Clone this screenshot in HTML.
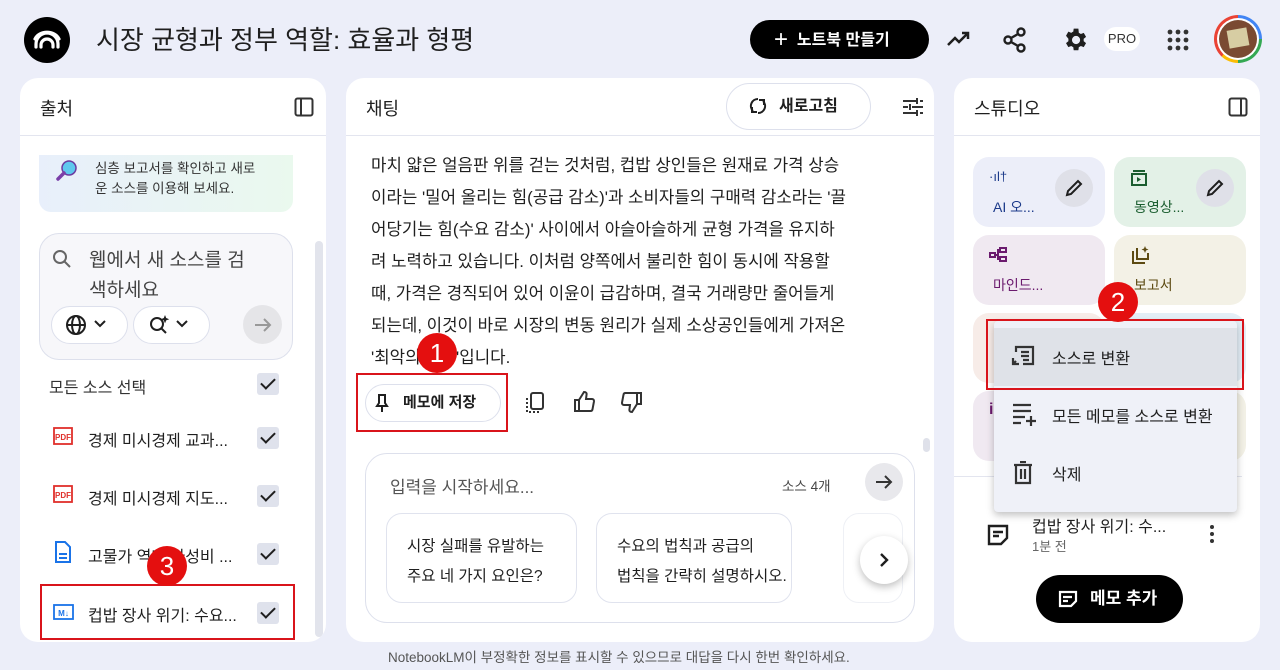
<!DOCTYPE html>
<html><head><meta charset="utf-8">
<style>
*{box-sizing:border-box;margin:0;padding:0}
body{width:1280px;height:670px;background:#eceef9;font-family:"Liberation Sans","Noto Sans CJK KR",sans-serif;color:#1f1f1f;position:relative;overflow:hidden}
.a{position:absolute}
.panel{position:absolute;background:#fff;border-radius:18px;top:78px;height:564px;overflow:hidden}
.ph{position:absolute;left:0;right:0;top:0;height:58px;border-bottom:1px solid #e3e5ef}
.ph span{position:absolute;left:20px;top:17px;font-size:18px;color:#1f1f1f}
.chk{position:absolute;width:22px;height:22px;background:#dfe2ec;border-radius:3px}
.chk:after{content:"";position:absolute;left:7px;top:2px;width:6px;height:12px;border:solid #1f1f1f;border-width:0 2px 2px 0;transform:rotate(45deg)}
.src{position:absolute;left:68px;font-size:16px;color:#1f1f1f}
.red{position:absolute;border:2px solid #d9141b}
.badge{position:absolute;width:40px;height:40px;border-radius:50%;background:#e40f0f;color:#fff;font-size:26px;text-align:center;line-height:40px}
.tl{position:absolute;left:371px;font-size:16.8px;color:#1f1f1f;white-space:nowrap}
.card{position:absolute;width:132px;height:70px;border-radius:16px}
.card .t{position:absolute;left:20px;top:40px;font-size:14px}
.ed{position:absolute;right:12px;top:12px;width:38px;height:38px;border-radius:50%;background:#dfe0e8}
</style></head><body>
<div class="a" style="left:24px;top:17px;width:46px;height:46px;border-radius:50%;background:#000">
<svg width="46" height="46" viewBox="0 0 46 46"><g fill="none" stroke="#fff" stroke-width="3.2" stroke-linecap="round"><path d="M12 30 V27 a11 11 0 0 1 22 0 V30"/><path d="M17 30 V28 a6 6 0 0 1 12 0 V30"/><path d="M11 22 a13 11 0 0 1 24 0"/></g></svg></div>
<div class="a" style="left:96px;top:20px;font-size:26px;color:#1f1f1f">시장 균형과 정부 역할: 효율과 형평</div>
<div class="a" style="left:750px;top:20px;width:179px;height:39px;background:#000;border-radius:20px;color:#fff;font-size:16px;font-weight:bold;line-height:39px;padding-left:24px"><span style="font-size:24px;font-weight:normal;vertical-align:-2px">+</span>&nbsp;&nbsp;노트북 만들기</div>
<svg class="a" style="left:946px;top:28px" width="26" height="22" viewBox="0 0 26 22"><path d="M2 17 L9 10 L13 14 L22 5 M16 5 H22 V11" fill="none" stroke="#1f1f1f" stroke-width="2.5"/></svg>
<svg class="a" style="left:1002px;top:26px" width="26" height="28" viewBox="0 0 26 28"><g fill="none" stroke="#1f1f1f" stroke-width="2.4"><circle cx="19" cy="6" r="3.5"/><circle cx="6" cy="14" r="3.5"/><circle cx="19" cy="22" r="3.5"/><path d="M9 12 L16 8 M9 16 L16 20"/></g></svg>
<svg class="a" style="left:1061px;top:26px" width="28" height="28" viewBox="0 0 24 24"><path fill="#1f1f1f" d="M19.4 13c.04-.33.06-.66.06-1s-.02-.67-.06-1l2.1-1.650-2-3.46-2.48 1a7.3 7.3 0 0 0-1.73-1L14.9 2.2h-4l-.38 2.65c-.63.25-1.2.6-1.730 1l-2.48-1-2 3.46L6.4 11c-.04.33-.07.66-.07 1s.03.67.07 1l-2.1 1.65 2 3.46 2.48-1c.53.4 1.1.75 1.73 1l.38 2.65h4l.38-2.65c.63-.25 1.2-.6 1.73-1l2.48 1 2-3.46L19.4 13zM12.9 15.5a3.5 3.5 0 1 1 0-7 3.5 3.5 0 0 1 0 7z"/></svg>
<div class="a" style="left:1104px;top:27px;width:36px;height:24px;border-radius:12px;background:#fff;font-size:13px;line-height:24px;text-align:center;color:#333">PRO</div>
<svg class="a" style="left:1166px;top:28px" width="24" height="24"><g fill="#333"><circle cx="4" cy="4" r="2.4"/><circle cx="12" cy="4" r="2.4"/><circle cx="20" cy="4" r="2.4"/><circle cx="4" cy="12" r="2.4"/><circle cx="12" cy="12" r="2.4"/><circle cx="20" cy="12" r="2.4"/><circle cx="4" cy="20" r="2.4"/><circle cx="12" cy="20" r="2.4"/><circle cx="20" cy="20" r="2.4"/></g></svg>
<div class="a" style="left:1214px;top:15px;width:48px;height:48px;border-radius:50%;background:conic-gradient(#4285f4 0 25%,#34a853 25% 50%,#fbbc05 50% 62%,#ea4335 62% 100%)"><div style="margin:3px;width:42px;height:42px;border-radius:50%;background:#fff;padding:2px"><div style="width:38px;height:38px;border-radius:50%;background:#7a4a32;position:relative"><div style="position:absolute;left:9px;top:9px;width:20px;height:18px;background:#d7cda3;transform:rotate(-10deg)"></div></div></div></div>

<div class="panel" style="left:20px;width:306px">
 <div class="ph"><span>출처</span>
 <svg class="a" style="left:274px;top:19px" width="20" height="20"><rect x="1.5" y="1.5" width="17" height="17" rx="2" fill="none" stroke="#333" stroke-width="2"/><path d="M7 2v16" stroke="#333" stroke-width="2"/></svg></div>
 <div class="a" style="left:19px;top:77px;width:254px;height:57px;border-radius:0 0 12px 12px;background:linear-gradient(90deg,#e8effb,#eaf9ee)"></div>
 <svg class="a" style="left:36px;top:81px" width="22" height="22"><circle cx="13" cy="9" r="7" fill="#5fc8ee" stroke="#6b3aa0" stroke-width="1.5"/><path d="M8 14 L2 20" stroke="#7a3fa8" stroke-width="3.5" stroke-linecap="round"/></svg>
 <div class="a" style="left:75px;top:81px;font-size:13.5px;line-height:20px;color:#333">심층 보고서를 확인하고 새로<br>운 소스를 이용해 보세요.</div>
 <div class="a" style="left:19px;top:155px;width:254px;height:127px;border:1px solid #dde0ec;border-radius:20px;background:#f7f7fa"></div>
 <svg class="a" style="left:32px;top:171px" width="20" height="20"><circle cx="8" cy="8" r="6" fill="none" stroke="#666" stroke-width="2"/><path d="M12.5 12.5 L18 18" stroke="#666" stroke-width="2"/></svg>
 <div class="a" style="left:69px;top:168px;font-size:19px;line-height:30px;color:#444">웹에서 새 소스를 검<br>색하세요</div>
 <div class="a" style="left:31px;top:228px;width:77px;height:38px;border:1px solid #dde0ec;border-radius:19px;background:#fff"></div>
 <svg class="a" style="left:45px;top:236px" width="22" height="22"><g fill="none" stroke="#1f1f1f" stroke-width="2"><circle cx="11" cy="11" r="9"/><ellipse cx="11" cy="11" rx="4" ry="9"/><path d="M2 11h18"/></g></svg>
 <svg class="a" style="left:74px;top:242px" width="12" height="8"><path d="M1 1l5 5 5-5" fill="none" stroke="#1f1f1f" stroke-width="2"/></svg>
 <div class="a" style="left:113px;top:228px;width:77px;height:38px;border:1px solid #dde0ec;border-radius:19px;background:#fff"></div>
 <svg class="a" style="left:128px;top:235px" width="24" height="24"><circle cx="9" cy="11" r="6" fill="none" stroke="#1f1f1f" stroke-width="2"/><path d="M13 15l5 5" stroke="#1f1f1f" stroke-width="2"/><path d="M17 2l1.2 3 3 1.2-3 1.2-1.2 3-1.2-3-3-1.2 3-1.2z" fill="#1f1f1f"/></svg>
 <svg class="a" style="left:156px;top:242px" width="12" height="8"><path d="M1 1l5 5 5-5" fill="none" stroke="#1f1f1f" stroke-width="2"/></svg>
 <div class="a" style="left:223px;top:227px;width:39px;height:39px;border-radius:50%;background:#e5e5e8"></div>
 <svg class="a" style="left:232px;top:236px" width="22" height="22"><path d="M3 11h15M12 5l6 6-6 6" fill="none" stroke="#999" stroke-width="2"/></svg>
 <div class="a" style="left:29px;top:296px;font-size:16px;color:#333">모든 소스 선택</div>
 <div class="chk" style="left:237px;top:295px"></div>
 <svg class="a" style="left:33px;top:349px" width="20" height="18"><rect x="1" y="1" width="18" height="16" fill="none" stroke="#e0302b" stroke-width="1.8"/><text x="10" y="13" font-size="8" font-weight="bold" fill="#e0302b" text-anchor="middle" font-family="Liberation Sans">PDF</text></svg>
 <div class="src" style="top:349px">경제 미시경제 교과...</div><div class="chk" style="left:237px;top:349px"></div>
 <svg class="a" style="left:33px;top:407px" width="20" height="18"><rect x="1" y="1" width="18" height="16" fill="none" stroke="#e0302b" stroke-width="1.8"/><text x="10" y="13" font-size="8" font-weight="bold" fill="#e0302b" text-anchor="middle" font-family="Liberation Sans">PDF</text></svg>
 <div class="src" style="top:407px">경제 미시경제 지도...</div><div class="chk" style="left:237px;top:407px"></div>
 <svg class="a" style="left:34px;top:463px" width="18" height="22"><path d="M2 1h9l5 5v15H2z" fill="none" stroke="#1a73e8" stroke-width="2"/><path d="M5 13h8M5 17h8" stroke="#1a73e8" stroke-width="2"/></svg>
 <div class="src" style="top:465px">고물가 역대 가성비 ...</div><div class="chk" style="left:237px;top:465px"></div>
 <svg class="a" style="left:33px;top:526px" width="21" height="16"><rect x="1" y="1" width="19" height="14" fill="none" stroke="#1a73e8" stroke-width="1.8"/><text x="10.5" y="12" font-size="8" font-weight="bold" fill="#1a73e8" text-anchor="middle" font-family="Liberation Sans">M↓</text></svg>
 <div class="src" style="top:524px">컵밥 장사 위기: 수요...</div><div class="chk" style="left:237px;top:524px"></div>
 <div class="a" style="left:295px;top:163px;width:8px;height:396px;border-radius:4px;background:#e2e4ec"></div>
</div>
<div class="red" style="left:40px;top:584px;width:255px;height:56px"></div>
<div class="badge" style="left:147px;top:546px">3</div>

<div class="panel" style="left:346px;width:588px">
 <div class="ph"><span>채팅</span></div>
 <div class="a" style="left:380px;top:5px;width:145px;height:47px;border:1px solid #dde0ec;border-radius:24px;font-size:16px;line-height:45px;padding-left:52px;font-weight:bold;color:#1f1f1f">새로고침</div>
 <svg class="a" style="left:402px;top:18px" width="20" height="20"><path d="M10 3a7 7 0 0 0-5 12M10 17a7 7 0 0 0 5-12" fill="none" stroke="#1f1f1f" stroke-width="2"/><path d="M4 11v5h5M16 9V4h-5" fill="none" stroke="#1f1f1f" stroke-width="2"/></svg>
 <svg class="a" style="left:556px;top:19px" width="22" height="20"><g stroke="#333" stroke-width="2"><path d="M1 4h13M18 4h3M1 10h5M10 10h11M1 16h13M18 16h3M15 1v6M8 7v6M15 13v6"/></g></svg>
 <div class="a" style="left:577px;top:360px;width:7px;height:14px;border-radius:4px;background:#dfe1ea"></div>
 <div class="a" style="left:19px;top:375px;width:550px;height:170px;border:1px solid #dde0ec;border-radius:22px"></div>
 <div class="a" style="left:44px;top:395px;font-size:17px;color:#555">입력을 시작하세요...</div>
 <div class="a" style="left:436px;top:397px;font-size:13.5px;color:#444">소스 4개</div>
 <div class="a" style="left:519px;top:385px;width:38px;height:38px;border-radius:50%;background:#e8e8ec"></div>
 <svg class="a" style="left:528px;top:394px" width="20" height="20"><path d="M2 10h15M11 4l6 6-6 6" fill="none" stroke="#333" stroke-width="2"/></svg>
 <div class="a" style="left:40px;top:435px;width:191px;height:90px;border:1px solid #e0e3ee;border-radius:16px;padding:18px 0 0 20px;font-size:15.5px;line-height:30px">시장 실패를 유발하는<br>주요 네 가지 요인은?</div>
 <div class="a" style="left:250px;top:435px;width:196px;height:90px;border:1px solid #e0e3ee;border-radius:16px;padding:18px 0 0 20px;font-size:15.5px;line-height:30px;white-space:nowrap">수요의 법칙과 공급의<br>법칙을 간략히 설명하시오.</div>
 <div class="a" style="left:497px;top:435px;width:60px;height:90px;border:1px solid #eef0f5;border-radius:16px"></div>
 <div class="a" style="left:514px;top:458px;width:48px;height:48px;border-radius:50%;background:#fff;box-shadow:0 3px 8px rgba(0,0,0,.25)"></div>
 <svg class="a" style="left:530px;top:472px" width="16" height="20"><path d="M5 4l6 6-6 6" fill="none" stroke="#1f1f1f" stroke-width="2.4"/></svg>
</div>
<div class="tl" style="top:152px">마치 얇은 얼음판 위를 걷는 것처럼, 컵밥 상인들은 원재료 가격 상승</div>
<div class="tl" style="top:184px">이라는 '밀어 올리는 힘(공급 감소)'과 소비자들의 구매력 감소라는 '끌</div>
<div class="tl" style="top:216px">어당기는 힘(수요 감소)' 사이에서 아슬아슬하게 균형 가격을 유지하</div>
<div class="tl" style="top:248px">려 노력하고 있습니다. 이처럼 양쪽에서 불리한 힘이 동시에 작용할</div>
<div class="tl" style="top:280px">때, 가격은 경직되어 있어 이윤이 급감하며, 결국 거래량만 줄어들게</div>
<div class="tl" style="top:312px">되는데, 이것이 바로 시장의 변동 원리가 실제 소상공인들에게 가져온</div>
<div class="tl" style="top:344px">'최악의 결과'입니다.</div>
<div class="a" style="left:365px;top:384px;width:136px;height:38px;border:1px solid #dde0ec;border-radius:19px;font-size:15px;font-weight:bold;line-height:36px;padding-left:37px">메모에 저장</div>
<svg class="a" style="left:374px;top:393px" width="16" height="20"><path d="M4 2h8M5 2v8l-2 3h10l-2-3V2M8 13v6" fill="none" stroke="#1f1f1f" stroke-width="2"/></svg>
<svg class="a" style="left:524px;top:391px" width="22" height="24"><rect x="7" y="2" width="12" height="16" rx="2" fill="none" stroke="#333" stroke-width="2"/><path d="M3 7v14h12" fill="none" stroke="#333" stroke-width="2" stroke-dasharray="2 2"/></svg>
<svg class="a" style="left:572px;top:390px" width="24" height="24"><path d="M3 10h4v11H3zM7 10l5-8c2 0 3 1 2.5 3L14 9h6a2 2 0 0 1 2 2.3l-1.5 8A2 2 0 0 1 18.5 21H7" fill="none" stroke="#333" stroke-width="2"/></svg>
<svg class="a" style="left:620px;top:390px" width="24" height="24"><g transform="rotate(180 12 12)"><path d="M3 10h4v11H3zM7 10l5-8c2 0 3 1 2.5 3L14 9h6a2 2 0 0 1 2 2.3l-1.5 8A2 2 0 0 1 18.5 21H7" fill="none" stroke="#333" stroke-width="2"/></g></svg>
<div class="red" style="left:356px;top:373px;width:152px;height:59px"></div>
<div class="badge" style="left:417px;top:333px">1</div>
<div class="a" style="left:388px;top:646px;font-size:13.5px;color:#555">NotebookLM이 부정확한 정보를 표시할 수 있으므로 대답을 다시 한번 확인하세요.</div>

<div class="panel" style="left:954px;width:306px">
 <div class="ph"><span>스튜디오</span>
 <svg class="a" style="left:274px;top:19px" width="20" height="20"><rect x="1.5" y="1.5" width="17" height="17" rx="2" fill="none" stroke="#333" stroke-width="2"/><path d="M13 2v16" stroke="#333" stroke-width="2"/></svg></div>
 <div class="card" style="left:19px;top:79px;background:#eceef9;color:#1c3a8a"><div class="a" style="left:16px;top:12px;font-size:13px">·ıl†</div><div class="t">AI 오...</div><div class="ed"><svg style="margin:9px" width="20" height="20"><path d="M3 17l1-4L14 3l3 3L7 16z" fill="none" stroke="#1f1f1f" stroke-width="2"/></svg></div></div>
 <div class="card" style="left:160px;top:79px;background:#e3f1e7;color:#1b5e30"><svg class="a" style="left:16px;top:12px" width="18" height="18"><rect x="2" y="5" width="14" height="11" fill="none" stroke="#1b5e30" stroke-width="2"/><path d="M3 2h12" stroke="#1b5e30" stroke-width="2"/><path d="M7 8l4 2.5L7 13z" fill="#1b5e30"/></svg><div class="t">동영상...</div><div class="ed"><svg style="margin:9px" width="20" height="20"><path d="M3 17l1-4L14 3l3 3L7 16z" fill="none" stroke="#1f1f1f" stroke-width="2"/></svg></div></div>
 <div class="card" style="left:19px;top:157px;background:#f0e9f1;color:#6b1a6e"><svg class="a" style="left:16px;top:12px" width="18" height="16"><g fill="none" stroke="#6b1a6e" stroke-width="2"><rect x="1" y="6" width="5" height="4"/><rect x="11" y="1" width="6" height="4"/><rect x="11" y="10" width="6" height="4"/><path d="M6 8h3V3h2M9 8v4h2"/></g></svg><div class="t">마인드...</div></div>
 <div class="card" style="left:160px;top:157px;background:#f3f1e6;color:#5c4a12"><svg class="a" style="left:16px;top:10px" width="20" height="20"><path d="M3 6v12h12M7 3v11h11V8" fill="none" stroke="#5c4a12" stroke-width="2"/><path d="M15 1l1 2.5 2.5 1-2.5 1L15 8l-1-2.5-2.5-1 2.5-1z" fill="#5c4a12"/></svg><div class="t">보고서</div></div>
 <div class="card" style="left:19px;top:235px;background:#f7ece8"></div>
 <div class="card" style="left:160px;top:235px;background:#e3eef6"></div>
 <div class="card" style="left:19px;top:313px;background:#f0e9f1"><div class="a" style="left:16px;top:10px;font-size:16px;font-weight:bold;color:#6b1a6e">i</div></div>
 <div class="card" style="left:160px;top:313px;background:#f3f1e6"></div>
 <div class="a" style="left:0;right:18px;top:398px;border-top:1px solid #e3e5ef"></div>
 <svg class="a" style="left:32px;top:445px" width="24" height="24"><path d="M3 3h18v12l-6 6H3z" fill="none" stroke="#1f1f1f" stroke-width="2.4"/><path d="M7 9h10M7 13h6" stroke="#1f1f1f" stroke-width="2.4"/></svg>
 <div class="a" style="left:78px;top:435px;font-size:16px">컵밥 장사 위기: 수...</div>
 <div class="a" style="left:78px;top:458px;font-size:13px;color:#666">1분 전</div>
 <svg class="a" style="left:254px;top:446px" width="8" height="20"><g fill="#333"><circle cx="4" cy="3" r="2"/><circle cx="4" cy="10" r="2"/><circle cx="4" cy="17" r="2"/></g></svg>
 <div class="a" style="left:82px;top:497px;width:147px;height:48px;border-radius:24px;background:#000;color:#fff;font-size:17px;font-weight:bold;line-height:48px;padding-left:54px">메모 추가</div>
 <svg class="a" style="left:104px;top:512px" width="20" height="18"><path d="M2 2h16v9l-5 5H2z" fill="none" stroke="#fff" stroke-width="2.2"/><path d="M5 7h9M5 11h5" stroke="#fff" stroke-width="2.2"/></svg>
</div>
<div class="a" style="left:994px;top:321px;width:243px;height:191px;background:#eff1f8;border-radius:4px;box-shadow:0 3px 8px rgba(0,0,0,.25)"></div>
<div class="a" style="left:994px;top:328px;width:243px;height:58px;background:#dfe2e8"></div>
<svg class="a" style="left:1010px;top:344px" width="26" height="26"><path d="M6 8V3h17v17H13" fill="none" stroke="#333" stroke-width="2.2"/><path d="M11 8h8M11 12h8M13 16h6" stroke="#333" stroke-width="2.2"/><path d="M3 14v6h6M6 17l-3 3" fill="none" stroke="#333" stroke-width="2.2"/></svg>
<div class="a" style="left:1052px;top:345px;font-size:16px">소스로 변환</div>
<svg class="a" style="left:1012px;top:403px" width="26" height="24"><path d="M1 2h18M1 8h18M1 14h12M1 20h8M19 13v10M14 18h10" stroke="#333" stroke-width="2.2"/></svg>
<div class="a" style="left:1052px;top:403px;font-size:16px">모든 메모를 소스로 변환</div>
<svg class="a" style="left:1013px;top:461px" width="20" height="24"><path d="M1 4h18M7 1h6M3 4v18h14V4M8 8v10M12 8v10" fill="none" stroke="#333" stroke-width="2.2"/></svg>
<div class="a" style="left:1052px;top:461px;font-size:16px">삭제</div>
<div class="red" style="left:986px;top:319px;width:258px;height:71px"></div>
<div class="badge" style="left:1098px;top:282px">2</div>
</body></html>
